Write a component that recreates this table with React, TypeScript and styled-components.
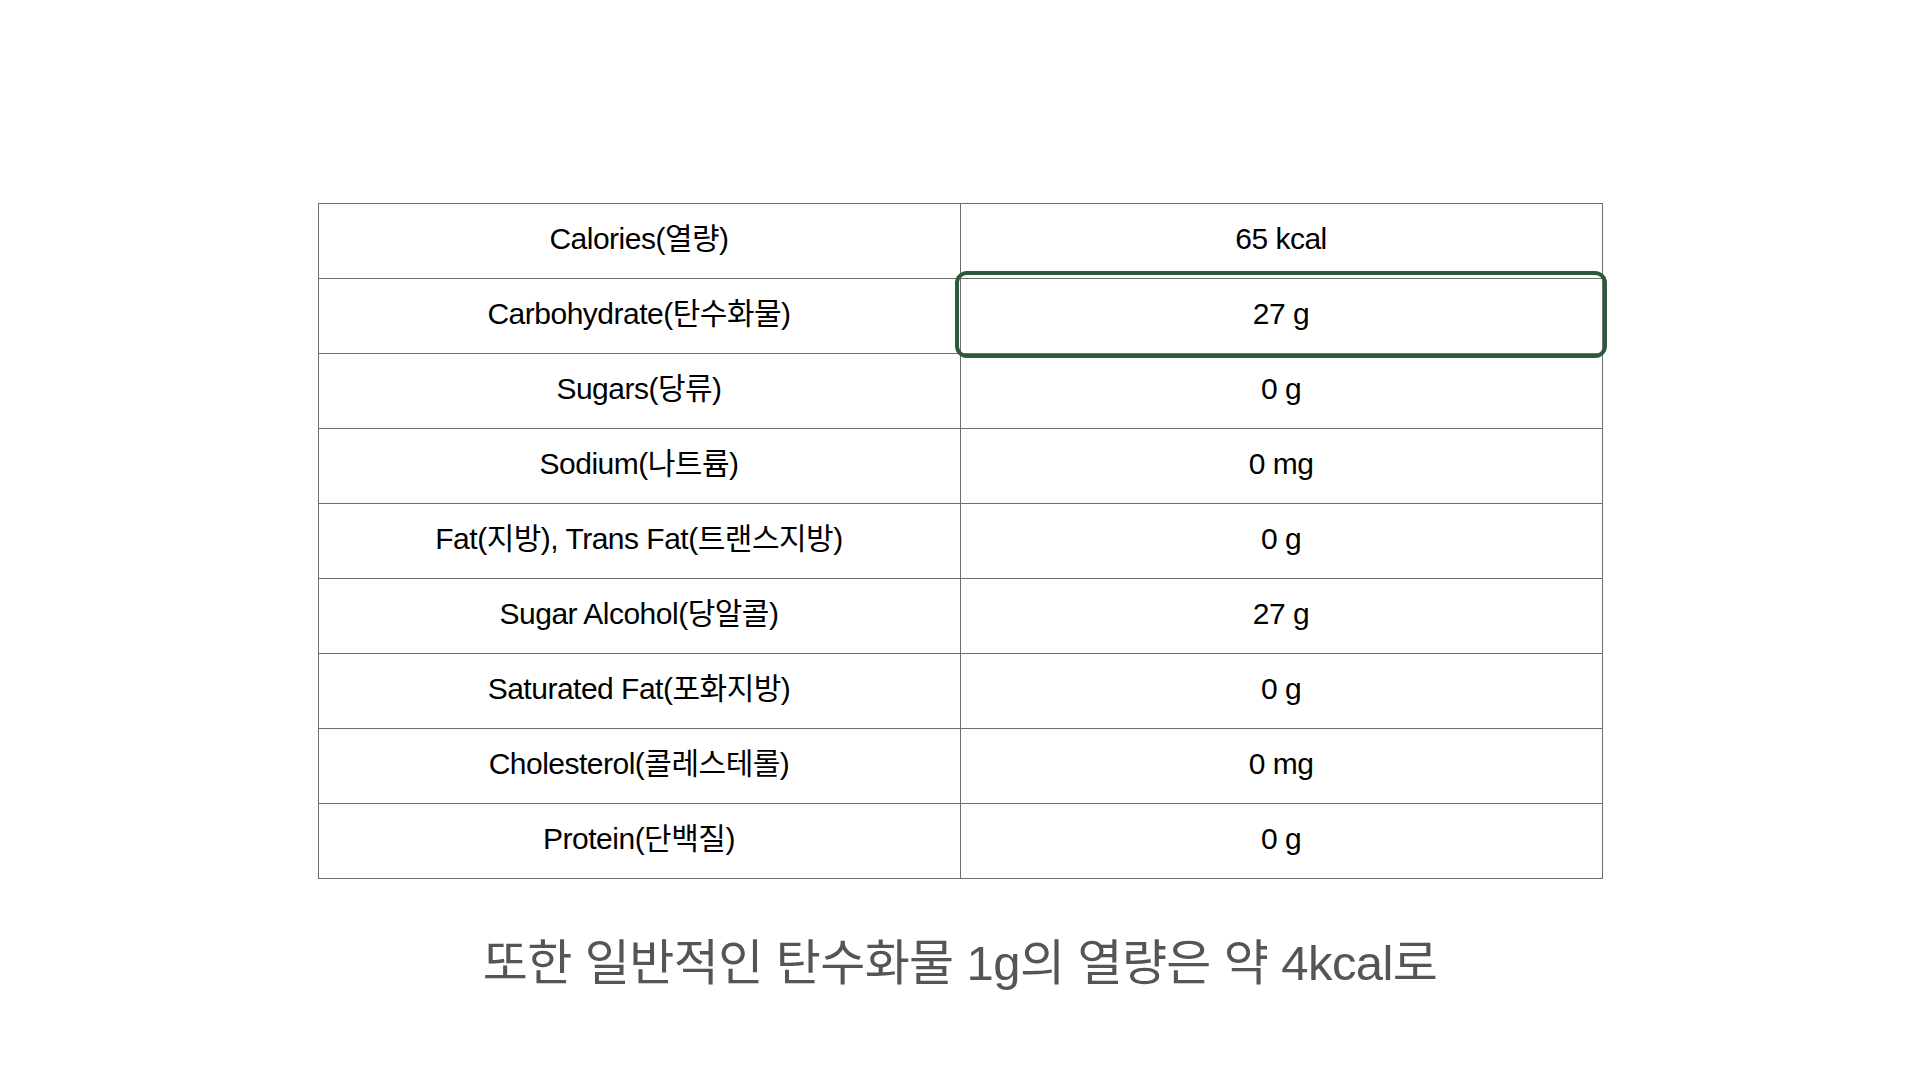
import React from "react";
import styled, { createGlobalStyle } from "styled-components";

const GlobalStyle = createGlobalStyle`
	html, body {
		margin: 0;
		padding: 0;
		background: #ffffff;
	}
	body {
		font-family: "Liberation Sans", "Noto Sans CJK KR", sans-serif;
	}
`;

const Page = styled("main")`
	width: 1920px;
	height: 1080px;
	display: flex;
	flex-direction: column;
	align-items: center;
	padding-top: 203px;
	box-sizing: border-box;
`;

const Table = styled("table")`
	width: 1285px;
	border-collapse: collapse;
	table-layout: fixed;
	font-size: 30px;
	line-height: 1.2;
	color: #000000;
	letter-spacing: -0.5px;
`;

const Cell = styled("td")<{ $highlight?: boolean }>`
	position: relative;
	height: 70px;
	padding: 0 0 4px;
	border: 1px solid #6e6e6e;
	text-align: center;
	vertical-align: middle;

	${({ $highlight }) =>
		$highlight &&
		`
		&::after {
			content: "";
			position: absolute;
			top: -8px;
			left: -6px;
			right: -5px;
			bottom: -5px;
			border: 4px solid #2b5a3c;
			border-radius: 12px;
			pointer-events: none;
		}
	`}
`;

const Caption = styled("p")`
	margin: 44px 0 0;
	font-size: 49px;
	color: #555555;
	letter-spacing: -0.6px;
`;

interface Nutrient {
	label: string;
	value: string;
	highlight?: boolean;
}

const nutrients: Array<Nutrient> = [
	{ label: "Calories(열량)", value: "65 kcal" },
	{ label: "Carbohydrate(탄수화물)", value: "27 g", highlight: true },
	{ label: "Sugars(당류)", value: "0 g" },
	{ label: "Sodium(나트륨)", value: "0 mg" },
	{ label: "Fat(지방), Trans Fat(트랜스지방)", value: "0 g" },
	{ label: "Sugar Alcohol(당알콜)", value: "27 g" },
	{ label: "Saturated Fat(포화지방)", value: "0 g" },
	{ label: "Cholesterol(콜레스테롤)", value: "0 mg" },
	{ label: "Protein(단백질)", value: "0 g" },
];

export default function App() {
	return (
		<>
			<GlobalStyle />
			<Page>
				<Table>
					<tbody>
						{nutrients.map(row => (
							<tr key={row.label}>
								<Cell>{row.label}</Cell>
								<Cell $highlight={row.highlight}>{row.value}</Cell>
							</tr>
						))}
					</tbody>
				</Table>
				<Caption>또한 일반적인 탄수화물 1g의 열량은 약 4kcal로</Caption>
			</Page>
		</>
	);
}
